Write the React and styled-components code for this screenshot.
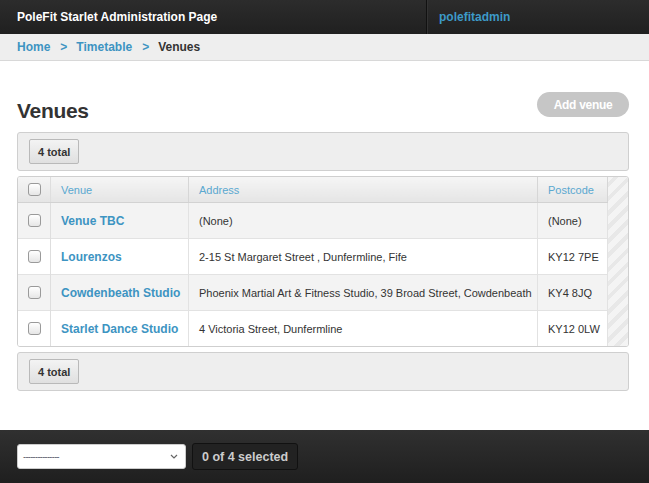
import React from "react";
import styled, { createGlobalStyle } from "styled-components";

const Global = createGlobalStyle`
  html, body { margin: 0; padding: 0; background: #fff; }
  body { font-family: "Liberation Sans", Arial, sans-serif; color: #333; }
`;

const Page = styled.div`
  min-height: 100vh;
  display: flex;
  flex-direction: column;
`;

const TopBar = styled.header`
  height: 34px;
  display: flex;
  background: linear-gradient(#2c2c2c, #202020);
`;

const Brand = styled.div`
  width: 427px;
  box-sizing: border-box;
  padding-left: 17px;
  display: flex;
  align-items: center;
  color: #fff;
  font-weight: bold;
  font-size: 12px;
  border-right: 1px solid #111;
`;

const User = styled.a`
  display: flex;
  align-items: center;
  padding-left: 11px;
  color: #3d9ac8;
  font-weight: bold;
  font-size: 12px;
  text-decoration: none;
  border-left: 1px solid #333;
`;

const Crumbs = styled.nav`
  height: 26px;
  background: #eee;
  border-bottom: 1px solid #d8d8d8;
  display: flex;
  align-items: center;
  padding-left: 17px;
  font-size: 12px;
  font-weight: bold;
`;

const Crumb = styled.a`
  color: ${(p) => (p.$current ? "#333" : "#3d94c2")};
  text-decoration: none;
`;

const Sep = styled.span`
  color: #3d94c2;
  margin: 0 9px 0 10px;
  font-weight: bold;
`;

const Main = styled.main`
  flex: 1;
  padding: 31px 20px 0 17px;
`;

const TitleRow = styled.div`
  display: flex;
  justify-content: space-between;
  align-items: flex-start;
  height: 40px;
`;

const Title = styled.h1`
  margin: 7px 0 0;
  font-size: 21px;
  font-weight: bold;
  color: #333;
  letter-spacing: -0.3px;
`;

const AddButton = styled.button`
  height: 25px;
  width: 92px;
  border: none;
  border-radius: 13px;
  background: #c6c6c6;
  color: #fff;
  font-family: inherit;
  font-size: 12px;
  font-weight: bold;
  letter-spacing: -0.3px;
  padding: 0;
`;

const Toolbar = styled.div`
  height: 39px;
  box-sizing: border-box;
  border: 1px solid #cfcfcf;
  border-radius: 3px;
  background: #eee;
  display: flex;
  align-items: center;
  padding-left: 11px;
  margin-top: ${(p) => p.$top || 0}px;
`;

const Total = styled.span`
  height: 25px;
  min-width: 50px;
  box-sizing: border-box;
  padding: 0 8px;
  display: flex;
  align-items: center;
  justify-content: center;
  border: 1px solid #b9b9b9;
  border-radius: 2px;
  background: linear-gradient(#f3f3f3, #e0e0e0);
  font-size: 11px;
  font-weight: bold;
  color: #333;
`;

const TableWrap = styled.div`
  margin-top: 5px;
  display: flex;
  border: 1px solid #cfcfcf;
  border-radius: 3px;
  overflow: hidden;
`;

const Table = styled.table`
  flex: 1;
  border-collapse: collapse;
  font-size: 11px;
`;

const Gutter = styled.div`
  width: 20px;
  flex: none;
  background: repeating-linear-gradient(
    -45deg,
    #f4f4f4 0 6px,
    #e8e8e8 6px 10px
  );
`;

const Th = styled.th`
  height: 25px;
  padding: 0 0 0 10px;
  text-align: left;
  font-weight: normal;
  color: #5aa8d0;
  background: linear-gradient(#f5f5f5, #e5e5e5);
  border-bottom: 1px solid #d2d2d2;
  border-right: 1px solid #d6d6d6;
  width: ${(p) => p.$w || "auto"};
`;

const Tr = styled.tr`
  background: ${(p) => (p.$alt ? "#f3f3f3" : "#fff")};
`;

const Td = styled.td`
  height: 35px;
  padding: 0 0 0 10px;
  border-top: 1px solid #e2e2e2;
  border-right: 1px solid #e2e2e2;
  color: #333;
  white-space: nowrap;
`;

const CheckCell = styled.td`
  width: 32px;
  padding: 0;
  text-align: center;
  border-top: 1px solid #e2e2e2;
  border-right: 1px solid #dedede;
  ${(p) =>
    p.$head &&
    `background: linear-gradient(#f5f5f5, #e5e5e5); border-top: none; border-bottom: 1px solid #d2d2d2; height: 25px;`}
`;

const Box = styled.span`
  display: inline-block;
  width: 11px;
  height: 11px;
  border: 1px solid #9a9a9a;
  border-radius: 3px;
  background: linear-gradient(#fff, #e6e6e6);
  vertical-align: middle;
`;

const Name = styled.a`
  color: #3d94c2;
  font-weight: bold;
  font-size: 12px;
  text-decoration: none;
`;

const Footer = styled.footer`
  height: 53px;
  background: linear-gradient(#303030, #1f1f1f);
  display: flex;
  align-items: center;
  padding-left: 17px;
  gap: 6px;
`;

const Select = styled.div`
  width: 169px;
  height: 25px;
  box-sizing: border-box;
  background: #fff;
  border: 1px solid #ccc;
  border-radius: 3px;
  display: flex;
  align-items: center;
  justify-content: space-between;
  padding: 0 7px 0 5px;
`;

const Dashes = styled.span`
  font-size: 9px;
  letter-spacing: -0.6px;
  color: #445;
  margin-top: 1px;
`;

const Selected = styled.div`
  height: 27px;
  box-sizing: border-box;
  padding: 0 9px;
  display: flex;
  align-items: center;
  border: 1px solid #111;
  border-radius: 3px;
  background: #222;
  color: #ccc;
  font-size: 12.5px;
  font-weight: bold;
`;

const rows = [
  { name: "Venue TBC", address: "(None)", post: "(None)" },
  { name: "Lourenzos", address: "2-15 St Margaret Street , Dunfermline, Fife", post: "KY12 7PE" },
  { name: "Cowdenbeath Studio", address: "Phoenix Martial Art & Fitness Studio, 39 Broad Street, Cowdenbeath", post: "KY4 8JQ" },
  { name: "Starlet Dance Studio", address: "4 Victoria Street, Dunfermline", post: "KY12 0LW" },
];

export default function App() {
  return (
    <Page>
      <Global />
      <TopBar>
        <Brand>PoleFit Starlet Administration Page</Brand>
        <User href="#">polefitadmin</User>
      </TopBar>
      <Crumbs>
        <Crumb href="#">Home</Crumb>
        <Sep>&gt;</Sep>
        <Crumb href="#">Timetable</Crumb>
        <Sep>&gt;</Sep>
        <Crumb $current>Venues</Crumb>
      </Crumbs>
      <Main>
        <TitleRow>
          <Title>Venues</Title>
          <AddButton>Add venue</AddButton>
        </TitleRow>
        <Toolbar>
          <Total>4 total</Total>
        </Toolbar>
        <TableWrap>
          <Table>
            <thead>
              <tr>
                <CheckCell as="th" $head><Box /></CheckCell>
                <Th $w="127px">Venue</Th>
                <Th>Address</Th>
                <Th $w="59px">Postcode</Th>
              </tr>
            </thead>
            <tbody>
              {rows.map((r, i) => (
                <Tr key={r.name} $alt={i % 2 === 0}>
                  <CheckCell><Box /></CheckCell>
                  <Td><Name href="#">{r.name}</Name></Td>
                  <Td>{r.address}</Td>
                  <Td>{r.post}</Td>
                </Tr>
              ))}
            </tbody>
          </Table>
          <Gutter />
        </TableWrap>
        <Toolbar $top={5}>
          <Total>4 total</Total>
        </Toolbar>
      </Main>
      <Footer>
        <Select>
          <Dashes>---------------</Dashes>
          <svg width="8" height="5" viewBox="0 0 8 5">
            <path d="M1 1l3 3 3-3" fill="none" stroke="#666" strokeWidth="1.2" />
          </svg>
        </Select>
        <Selected>0 of 4 selected</Selected>
      </Footer>
    </Page>
  );
}
